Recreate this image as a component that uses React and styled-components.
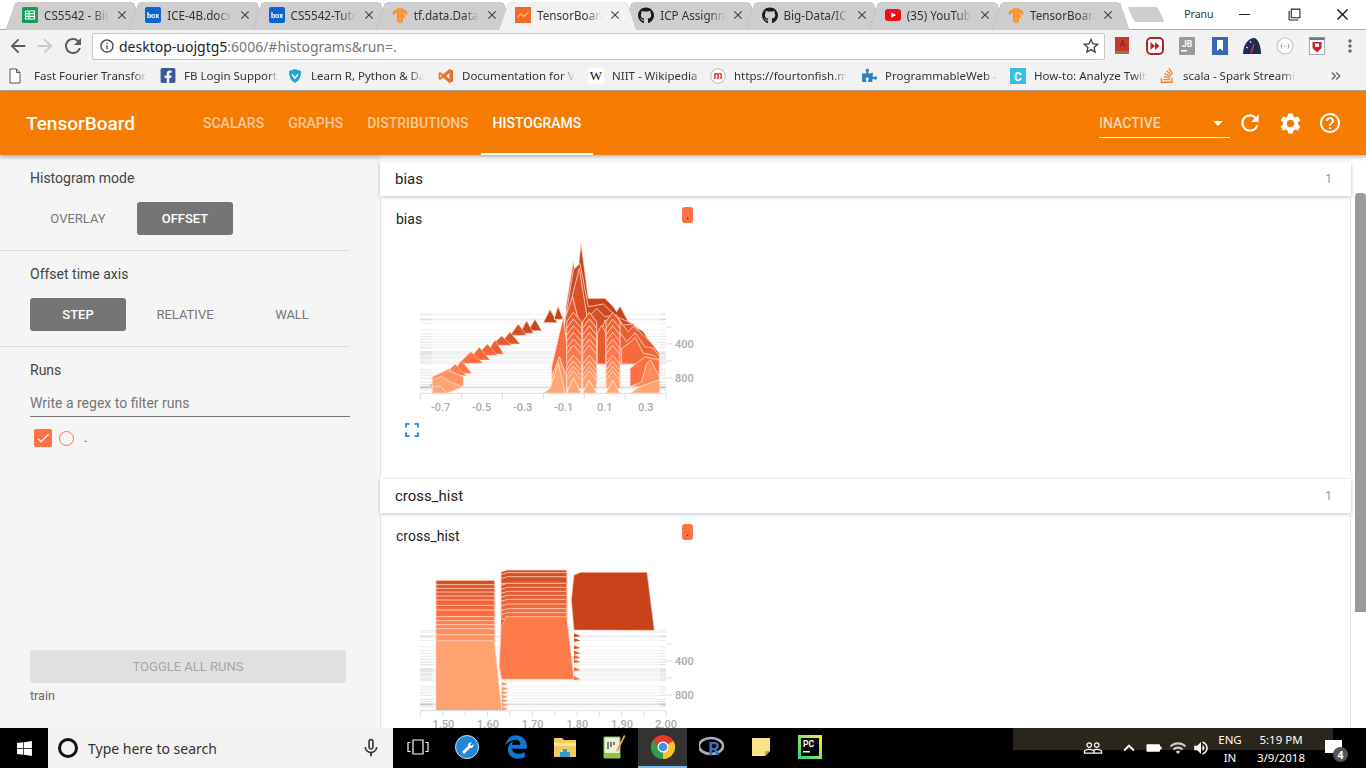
import React from "react";
import styled, { createGlobalStyle } from "styled-components";
import { FaGithub, FaFacebookSquare, FaWindows, FaStackOverflow, FaPuzzlePiece, FaEdgeLegacy } from "react-icons/fa";
import { SiTensorflow } from "react-icons/si";
import {
  MdRefresh, MdSettings, MdHelpOutline, MdArrowBack, MdArrowForward, MdClose,
  MdInfoOutline, MdStarBorder, MdCheck, MdMoreVert, MdKeyboardDoubleArrowRight,
  MdFilterNone, MdKeyboardArrowUp, MdVolumeUp, MdWifi, MdBatteryFull,
  MdMicNone, MdPeopleOutline,
} from "react-icons/md";

const GlobalStyle = createGlobalStyle`
  html, body { margin: 0; padding: 0; height: 100%; overflow: hidden; background: #fff; }
  * { box-sizing: border-box; }
`;

const mix = (t) => {
  const stops = [[200, 66, 26], [255, 112, 67], [255, 166, 116]];
  const p = t < 0.6 ? t / 0.6 : (t - 0.6) / 0.4;
  const a = t < 0.6 ? stops[0] : stops[1];
  const b = t < 0.6 ? stops[1] : stops[2];
  return `rgb(${a.map((v, i) => Math.round(v + (b[i] - v) * p)).join(",")})`;
};

function Sheets() {
  return (
    <svg width="16" height="16" viewBox="0 0 16 16">
      <rect width="16" height="16" rx="1.5" fill="#0f9d58" />
      <path d="M3.5 4h9v8h-9zM3.5 6.7h9M3.5 9.3h9M7 4v8" fill="none" stroke="#fff" strokeWidth="1.2" />
    </svg>
  );
}
function Box() {
  return (
    <svg width="16" height="16" viewBox="0 0 16 16">
      <rect width="16" height="16" rx="2" fill="#0b63d8" />
      <text x="8" y="11" fontSize="7.5" fontWeight="700" fontFamily="Roboto, sans-serif" fill="#fff" textAnchor="middle">box</text>
    </svg>
  );
}
function BoardIcon() {
  return (
    <svg width="16" height="16" viewBox="0 0 16 16">
      <rect width="16" height="16" fill="#f4692a" />
      <path d="M2.5 10.5 6 7l2.5 2.5L13.5 5" fill="none" stroke="#ffc23d" strokeWidth="1.4" />
    </svg>
  );
}
function YouTube() {
  return (
    <svg width="16" height="16" viewBox="0 0 16 16">
      <rect y="2" width="16" height="12" rx="3" fill="#e8101a" />
      <path d="M6.3 5.2 11 8l-4.7 2.8z" fill="#fff" />
    </svg>
  );
}
const Flow = () => <SiTensorflow size={17} color="#ff8f1c" />;
const Git = () => <FaGithub size={17} color="#1b1b1b" />;

const tabs = [
  [Sheets, "CS5542 - Big"],
  [Box, "ICE-4B.docx"],
  [Box, "CS5542-Tuto"],
  [Flow, "tf.data.Data"],
  [BoardIcon, "TensorBoard"],
  [Git, "ICP Assignm"],
  [Git, "Big-Data/IC"],
  [YouTube, "(35) YouTub"],
  [Flow, "TensorBoard"],
];

function PageIcon() {
  return (
    <svg width="16" height="16" viewBox="0 0 16 16">
      <path d="M3 1h6.5L13 4.5V15H3z M9.5 1v3.5H13" fill="#fff" stroke="#555" strokeWidth="1" />
    </svg>
  );
}
function ShieldIcon() {
  return (
    <svg width="16" height="16" viewBox="0 0 16 16">
      <path d="M8 1 14 3c0 6-1.5 9.5-6 12C3.500 12.500 2 9 2 3z" fill="#2aa3cf" />
      <path d="M5 6.500 8 10l3-3.500" fill="none" stroke="#fff" strokeWidth="1.6" />
    </svg>
  );
}
function VsIcon() {
  return (
    <svg width="16" height="16" viewBox="0 0 16 16">
      <path d="M11.500 1 15 2.500v11L11.500 15 5 9.500 2 12 .7 11V5L2 4l3 2.500zM11.500 5 8 8l3.500 3zM2.300 6.300v3.400L4 8z" fill="#e8702a" />
    </svg>
  );
}
function WikiIcon() {
  return (
    <IconTile $bg="#fff">
      <WikiLetter>W</WikiLetter>
    </IconTile>
  );
}
function FourIcon() {
  return (
    <svg width="16" height="16" viewBox="0 0 16 16">
      <circle cx="8" cy="8" r="7.200" fill="#fff" stroke="#bbb" />
      <text x="8" y="11" fontSize="10" fontWeight="700" fontFamily="Roboto, sans-serif" fill="#d8262c" textAnchor="middle">m</text>
    </svg>
  );
}
function CIcon() {
  return (
    <svg width="16" height="16" viewBox="0 0 16 16">
      <rect width="16" height="16" fill="#35c0e8" />
      <text x="8" y="12.500" fontSize="12" fontWeight="700" fontFamily="Roboto, sans-serif" fill="#fff" textAnchor="middle">C</text>
    </svg>
  );
}

const bookmarks = [
  [PageIcon, "Fast Fourier Transform", 153, 113],
  [() => <FaFacebookSquare size={17} color="#3b5998" />, "FB Login Support", 127, 95],
  [ShieldIcon, "Learn R, Python & Da", 151, 113],
  [VsIcon, "Documentation for V", 150, 113],
  [WikiIcon, "NIIT - Wikipedia", 122, 90],
  [FourIcon, "https://fourtonfish.ma", 151, 113],
  [() => <FaPuzzlePiece size={15} color="#2b83b8" />, "ProgrammableWeb -", 149, 113],
  [CIcon, "How-to: Analyze Twit", 149, 113],
  [() => <FaStackOverflow size={17} color="#f48024" />, "scala - Spark Streamin", 165, 113],
];

function ExtBook() {
  return (
    <svg width="18" height="20" viewBox="0 0 18 20">
      <path d="M2 1h14v15H4c-1.500 0-2 1-2 2z" fill="#c8382e" />
      <path d="M2 16.500c0-1 .8-1.500 2-1.500h12v3H2z" fill="#8a7a52" />
      <text x="9.500" y="11" fontSize="9" fontFamily="Roboto, sans-serif" fill="#7d1810" textAnchor="middle">A</text>
    </svg>
  );
}
function ExtForward() {
  return (
    <svg width="18" height="18" viewBox="0 0 18 18">
      <rect x="1" y="1" width="16" height="16" rx="4" fill="#fff" stroke="#b3202a" strokeWidth="2" />
      <path d="M4.500 5v8l4.500-4zM9 5v8l4.500-4z" fill="#b3202a" />
    </svg>
  );
}
function ExtJb() {
  return (
    <svg width="16" height="18" viewBox="0 0 16 18">
      <rect width="16" height="18" rx="1" fill="#9a9a9a" />
      <text x="8" y="9.500" fontSize="8.500" fontWeight="700" fontFamily="Roboto, sans-serif" fill="#fff" textAnchor="middle">JB</text>
      <rect x="2" y="13" width="6" height="1.500" fill="#fff" />
    </svg>
  );
}
function ExtMark() {
  return (
    <svg width="16" height="18" viewBox="0 0 16 18">
      <rect width="16" height="18" fill="#3a66b8" />
      <path d="M5 3h6v11l-3-2.500L5 14z" fill="#fff" />
    </svg>
  );
}
function ExtGauge() {
  return (
    <svg width="18" height="16" viewBox="0 0 18 16">
      <path d="M0 16C0 6 6 0 11 0c4 0 7 8 7 16z" fill="#1b2a63" />
      <path d="M15 13c0-4-2-8-4-10" fill="none" stroke="#2b2b3d" strokeWidth="3" />
      <path d="M8 15 11 6" stroke="#e0342c" strokeWidth="1.500" />
      <path d="M3 9l2 1M7 3l1 2" stroke="#fff" strokeWidth="1" />
    </svg>
  );
}
function ExtDots() {
  return (
    <svg width="18" height="18" viewBox="0 0 18 18">
      <circle cx="9" cy="9" r="8" fill="#fff" stroke="#c4c4c4" strokeWidth="1.200" />
      <path d="M6 6.500c-1 1.500-1 3.500 0 5M12 6.500c1 1.500 1 3.500 0 5" fill="none" stroke="#999" />
      <path d="M7.500 9h3" stroke="#999" strokeDasharray="1 1" />
    </svg>
  );
}
function ExtShield() {
  return (
    <svg width="16" height="18" viewBox="0 0 16 18">
      <rect x=".5" y=".5" width="15" height="17" fill="#fff" stroke="#aaa" />
      <rect x=".5" y=".5" width="15" height="2.500" fill="#607d8b" />
      <path d="M3.500 5h9v6l-4.500 4.500L3.500 11z" fill="#c5242c" />
      <path d="M6 6.500h4v3.500H6z" fill="#fff" />
    </svg>
  );
}

const extensions = [ExtBook, ExtForward, ExtJb, ExtMark, ExtGauge, ExtDots, ExtShield];

const biasBands = [
  [340, 3, 0.14], [345, 2, 0.1], [356, 3, 0.3], [362, 2, 0.12], [370, 2, 0.14], [388, 3, 0.1],
  [400, 3, 0.1], [408, 3, 0.12], [416, 4, 0.09], [425, 4, 0.12], [433, 5, 0.1], [441, 4, 0.13],
  [453, 12, 0.14], [467, 12, 0.11], [481, 12, 0.1], [506, 6, 0.08], [515, 5, 0.09], [524, 5, 0.1],
  [533, 4, 0.12], [545, 3, 0.14], [552, 3, 0.14], [559, 6, 0.36], [568, 3, 0.12],
];
const crossBands = biasBands.map(([y, h, o]) => [y - 9, h, o]);

const wing = [
  [405, 358, 392, 20], [380, 362, 400, 20], [355, 372, 406, 24], [330, 396, 432, 30], [305, 408, 436, 30],
  [285, 420, 462, 26], [262, 432, 466, 30], [238, 442, 480, 32], [213, 455, 490, 36], [185, 482, 520, 30],
  [165, 492, 527, 34], [145, 506, 532, 40], [122, 522, 558, 34],
];

const backRows = [
  [0, "430,368 450,328 472,368"],
  [0, "462,358 474,318 490,358"],
  [0, "498,320 520,185 530,250 543,130 565,295 615,295 640,320 650,335 660,318 685,365 730,395 780,470 500,470"],
  [0.08, "500,335 520,210 540,190 565,320 610,312 650,350 700,372 740,420 778,470 500,470"],
  [0.2, "490,440 505,345 520,275 538,205 562,355 590,325 615,350 650,345 668,375 700,372 745,430 778,460 778,492 490,492"],
  [0.3, "478,470 497,350 518,290 545,400 565,385 590,440 615,360 640,400 660,370 690,420 735,430 778,480 778,492 665,492 655,440 630,492 592,492 565,440 545,468 478,468"],
  [0.34, "592,492 592,400 605,375 618,400 618,492"],
  [0.36, "640,492 640,400 660,365 685,395 700,378 730,405 755,430 778,460 778,492"],
  [0.44, "640,492 640,420 655,390 680,425 705,398 735,440 760,445 778,470 778,492"],
  [0.52, "665,492 665,445 690,428 705,412 730,460 760,465 778,480 778,492"],
];

const chevronCols = [
  [500, 520, 545],
  [548, 568, 590],
  [618, 638, 660],
];
const chevronRows = [-190, -170, -150, -130, -110, -92, -62, -44, -28, -14];

function BiasPlot() {
  return (
    <>
      {wing.map(([cx, top, base, half], i) => (
        <polygon
          key={cx}
          points={`${cx - half},${base} ${cx},${top} ${cx + half},${base}`}
          fill={mix(0.05 + (i / wing.length) * 0.85)}
          stroke="#ffd9c9"
          strokeWidth="1.500"
        />
      ))}
      <polygon points="97,558 97,530 140,510 190,530 190,558" fill={mix(0.85)} stroke="#ffe0d2" strokeWidth="2" />
      <polygon points="97,580 97,542 125,528 150,545 190,560 140,580" fill={mix(1)} stroke="#ffe0d2" strokeWidth="2" />
      <polygon points="97,580 97,562 120,558 142,580" fill={mix(1)} stroke="#ffe0d2" strokeWidth="2" />
      {backRows.map(([t, points]) => (
        <polygon key={points} points={points} fill={mix(t)} stroke="#ffd9c9" strokeWidth="2.500" />
      ))}
      <polygon points="455,500 490,350 505,470 505,530 455,530" fill={mix(0.55)} stroke="#ffe0d2" strokeWidth="2.500" />
      {chevronRows.map((off, r) =>
        chevronCols.map(([a, b, c]) => (
          <polygon
            key={`${a}${off}`}
            points={`${a},${580 + off} ${a},${555 + off} ${b},${527 + off} ${c},${555 + off} ${c},${580 + off}`}
            fill={mix(0.36 + r * 0.065)}
            stroke="#ffe0d2"
            strokeWidth="2.500"
          />
        ))
      )}
      <polygon points="690,560 690,505 735,470 778,480 778,560" fill={mix(0.6)} stroke="#ffe0d2" strokeWidth="2.500" />
      <polygon points="690,560 725,545 740,490 752,480 778,530 778,560" fill={mix(0.8)} stroke="#ffe0d2" strokeWidth="2.500" />
      <polygon points="455,530 478,470 500,530 500,580 455,580" fill={mix(0.9)} stroke="#ffe6db" strokeWidth="2.500" />
      <polygon points="430,580 450,565 475,490 495,580" fill={mix(1)} stroke="#ffe6db" strokeWidth="2.500" />
      <polygon points="500,580 520,532 543,580" fill={mix(1)} stroke="#ffe6db" strokeWidth="2.500" />
      <polygon points="548,580 568,540 590,580" fill={mix(1)} stroke="#ffe6db" strokeWidth="2.500" />
      <polygon points="618,580 638,540 660,580" fill={mix(1)} stroke="#ffe6db" strokeWidth="2.500" />
      <polygon points="690,580 720,560 780,538 780,580" fill={mix(1)} stroke="#ffe6db" strokeWidth="2.500" />
    </>
  );
}

const leftStripes = [181, 194, 205, 216, 228, 240, 256, 270, 290, 302, 314, 326, 344];
const midStripes = [150, 158, 170, 190, 202, 214, 226, 238, 252, 266, 278];
const teeth = [340, 354, 376, 392, 405, 418, 442];

function CrossPlot() {
  return (
    <>
      <polygon points="522,330 514,240 522,165 542,157 741,157 763,331" fill="#c8431a" stroke="#ffd9c9" strokeWidth="1.500" />
      {leftStripes.map((y, i) => (
        <polygon
          key={y}
          points={`108,${y + 22} 108,${y} 283,${y} 286,${y + 22}`}
          fill={mix(0.15 + i * 0.06)}
          stroke="#ffd9c9"
          strokeWidth="2.500"
        />
      ))}
      <polygon points="303,320 303,158 322,150 500,150 502,300" fill={mix(0.3)} />
      {midStripes.map((y, i) => (
        <polygon
          key={y}
          points={`303,${y + 20} 303,${y + 6} 322,${y} 500,${y} 502,${y + 20}`}
          fill={mix(0.1 + i * 0.045)}
          stroke="#ffd9c9"
          strokeWidth="2.500"
        />
      ))}
      <polygon points="298,440 303,320 320,290 500,290 522,478 305,478" fill="#ff7a4b" stroke="#ffd9c9" strokeWidth="2" />
      {teeth.map((y, i) => (
        <polygon key={y} points={`522,${y} 542,${y + 8} 522,${y + 12}`} fill={mix(0.1 + i * 0.08)} />
      ))}
      <polygon points="522,468 542,478 522,480" fill={mix(0.6)} />
      {[486, 500, 512, 524, 536, 548, 560].map((y) => (
        <polygon key={y} points={`305,${y} 325,${y + 6} 305,${y + 12}`} fill="#ff9c6e" />
      ))}
      <polygon points="108,362 283,362 305,572 108,572" fill="#ffa26f" stroke="#ffd9c9" strokeWidth="2" />
    </>
  );
}

function Axes({ bands, baseY, labels, tickXs, labelXs, rightTicks, children }) {
  return (
    <>
      {bands.map(([y, h, o]) => (
        <g key={y}>
          <rect x="60" y={y} width="738" height={h} fill="#9e9e9e" opacity={o} />
          <rect x="60" y={y} width="37" height={h} fill="#9e9e9e" opacity={o} />
          <rect x="780" y={y} width="18" height={h} fill="#9e9e9e" opacity={o} />
        </g>
      ))}
      {children}
      <path d={`M61 ${baseY + 18}V${baseY}H798V${baseY + 18}`} fill="none" stroke="#ddd" strokeWidth="3" />
      {tickXs.map((x) => (
        <path key={x} d={`M${x} ${baseY}v18`} stroke="#ddd" strokeWidth="3" />
      ))}
      {labels.map((l, i) => (
        <AxisText key={l} x={labelXs[i]} y={baseY + 53} textAnchor="middle">{l}</AxisText>
      ))}
      {rightTicks.map((y) => (
        <path key={y} d={`M798 ${y}h18`} stroke="#ddd" strokeWidth="3" />
      ))}
      <AxisText x="825" y={rightTicks[1] + 11}>400</AxisText>
      <AxisText x="825" y={rightTicks[3] + 11}>800</AxisText>
    </>
  );
}

function BiasChart() {
  return (
    <ChartSvg viewBox="0 96 900 552">
      <Axes
        bands={biasBands}
        baseY={580}
        labels={["-0.7", "-0.5", "-0.3", "-0.1", "0.1", "0.3"]}
        tickXs={[184, 307, 430, 553, 676]}
        labelXs={[122, 245, 368, 491, 614, 737]}
        rightTicks={[381, 432, 483, 534]}
      >
        <BiasPlot />
      </Axes>
    </ChartSvg>
  );
}

function CrossChart() {
  return (
    <ChartSvg viewBox="0 87 900 552">
      <Axes
        bands={crossBands}
        baseY={572}
        labels={["1.50", "1.60", "1.70", "1.80", "1.90", "2.00"]}
        tickXs={[129, 196, 263, 330, 397, 464, 531, 598, 665, 732]}
        labelXs={[130, 264, 398, 532, 666, 798]}
        rightTicks={[372, 423, 474, 525]}
      >
        <CrossPlot />
      </Axes>
    </ChartSvg>
  );
}

function ExpandIcon() {
  return (
    <ExpandSvg width="14" height="14" viewBox="0 0 14 14">
      <path d="M1 4.500V1h3.500M9.500 1H13v3.500M13 9.500V13H9.500M4.500 13H1V9.500" fill="none" stroke="#2196f3" strokeWidth="2" />
    </ExpandSvg>
  );
}

function Section({ title, chart }) {
  return (
    <>
      <CategoryHeader>
        <CategoryName>{title}</CategoryName>
        <CategoryCount>1</CategoryCount>
      </CategoryHeader>
      <CategoryBody>
        <TagRow>
          <TagName>{title}</TagName>
          <RunChip>.</RunChip>
        </TagRow>
        {chart}
        <ExpandIcon />
      </CategoryBody>
    </>
  );
}

function ChromeLogo() {
  return (
    <svg width="24" height="24" viewBox="0 0 24 24">
      <circle cx="12" cy="12" r="12" fill="#e23b2e" />
      <path d="M12 12 22.400 6A12 12 0 0 1 12 24z" fill="#fbc02d" />
      <path d="M12 12 12 24A12 12 0 0 1 1.600 6z" fill="#2e9e4f" />
      <circle cx="12" cy="12" r="5.500" fill="#fff" />
      <circle cx="12" cy="12" r="4.300" fill="#4a8df0" />
    </svg>
  );
}
function WrenchLogo() {
  return (
    <svg width="24" height="24" viewBox="0 0 24 24">
      <circle cx="12" cy="12" r="11.500" fill="#1f87d6" stroke="#cfe7f8" />
      <path d="M7 17l6-6c-.5-2 1-4 4-3.500l-2 2 1.500 1.500 2-2c.5 3-1.500 4.500-3.500 4L9 19z" fill="#fff" />
    </svg>
  );
}
function FolderLogo() {
  return (
    <svg width="24" height="22" viewBox="0 0 24 22">
      <path d="M1 2h8l2 2h12v17H1z" fill="#f3cd5f" />
      <path d="M1 7h22v3H1z" fill="#fbe59a" />
      <path d="M7 16h10v5H7z" fill="#2c9ad6" />
      <path d="M10 13h4v3h-4z" fill="#2c9ad6" />
    </svg>
  );
}
function NoteLogo() {
  return (
    <svg width="24" height="26" viewBox="0 0 24 26">
      <path d="M2 3h16v21H2z" fill="#e8f0d8" stroke="#8eb85c" />
      <path d="M2 19h16v5H2z" fill="#8ec63f" />
      <path d="M6 8v7M9 8v5M12 8v3" stroke="#333" strokeWidth="1.200" />
      <path d="M22 1 15 15l-1 3 2.500-2L23.500 2z" fill="#e9a23b" />
    </svg>
  );
}
function RLogo() {
  return (
    <svg width="26" height="22" viewBox="0 0 26 22">
      <ellipse cx="12" cy="10" rx="12" ry="8" fill="none" stroke="#a9b1bf" strokeWidth="2.500" />
      <text x="15" y="19" fontSize="18" fontWeight="700" fontFamily="Roboto, sans-serif" fill="#3b6fb6" textAnchor="middle">R</text>
    </svg>
  );
}
function StickyLogo() {
  return (
    <svg width="20" height="20" viewBox="0 0 20 20">
      <path d="M1 1h18v13l-5 5H1z" fill="#f7e38a" />
      <path d="M14 19v-5h5z" fill="#c9a938" />
    </svg>
  );
}
function PyLogo() {
  return (
    <svg width="24" height="24" viewBox="0 0 24 24">
      <defs>
        <linearGradient id="pyFrame" x1="0" y1="1" x2="1" y2="0">
          <stop offset="0" stopColor="#21d789" />
          <stop offset="1" stopColor="#f4ee40" />
        </linearGradient>
      </defs>
      <rect width="24" height="24" fill="url(#pyFrame)" />
      <rect x="3" y="3" width="18" height="18" fill="#000" />
      <text x="5" y="12" fontSize="8.500" fontWeight="700" fontFamily="Roboto, sans-serif" fill="#fff">PC</text>
      <rect x="5" y="16" width="7" height="1.500" fill="#fff" />
    </svg>
  );
}
function TaskViewIcon() {
  return (
    <svg width="22" height="16" viewBox="0 0 22 16">
      <path d="M6 1h10v14H6zM3.500 3.500H1v9h2.500M18.500 3.500H21v9h-2.500" fill="none" stroke="#fff" strokeWidth="1.200" />
    </svg>
  );
}

const taskApps = [
  [TaskViewIcon, false],
  [WrenchLogo, false],
  [() => <FaEdgeLegacy size={24} color="#0f78d4" />, false],
  [FolderLogo, false],
  [NoteLogo, false],
  [ChromeLogo, true],
  [RLogo, false],
  [StickyLogo, false],
  [PyLogo, false],
];

export default function App() {
  return (
    <Screen>
      <GlobalStyle />
      <TabStrip>
        {tabs.map(([Icon, label], i) => (
          <TabWrap key={i} $active={i === 4}>
            <TabShape $active={i === 4}>
              <FavSlot><Icon /></FavSlot>
              <TabLabel>{label}</TabLabel>
              <MdClose size={14} color="#444" />
            </TabShape>
          </TabWrap>
        ))}
        <NewTab />
        <ProfileName>Pranu</ProfileName>
        <WindowButtons>
          <WindowButton><MinimizeBar /></WindowButton>
          <WindowButton><MdFilterNone size={13} color="#222" /></WindowButton>
          <WindowButton><MdClose size={19} color="#222" /></WindowButton>
        </WindowButtons>
      </TabStrip>

      <Toolbar>
        <NavButton><MdArrowBack size={22} color="#5a5a5a" /></NavButton>
        <NavButton><MdArrowForward size={22} color="#c8c8c8" /></NavButton>
        <NavButton><MdRefresh size={24} color="#5a5a5a" /></NavButton>
        <Omnibox>
          <MdInfoOutline size={16} color="#444" />
          <UrlHost>desktop-uojgtg5</UrlHost>
          <UrlRest>:6006/#histograms&amp;run=.</UrlRest>
          <StarSlot><MdStarBorder size={20} color="#444" /></StarSlot>
        </Omnibox>
        <ExtRow>
          {extensions.map((Ext, i) => (
            <ExtCell key={i}><Ext /></ExtCell>
          ))}
          <ExtCell><MdMoreVert size={20} color="#666" /></ExtCell>
        </ExtRow>
      </Toolbar>

      <BookmarkBar>
        {bookmarks.map(([Icon, label, w, lw]) => (
          <Bookmark key={label} $w={w}>
            <FavSlot><Icon /></FavSlot>
            <BookmarkLabel $w={lw}>{label}</BookmarkLabel>
          </Bookmark>
        ))}
        <MoreBookmarks><MdKeyboardDoubleArrowRight size={16} color="#666" /></MoreBookmarks>
      </BookmarkBar>

      <TopBar>
        <Brand>TensorBoard</Brand>
        <NavTab>Scalars</NavTab>
        <NavTab>Graphs</NavTab>
        <NavTab>Distributions</NavTab>
        <NavTab $active>Histograms</NavTab>
        <RunSelect>
          <span>INACTIVE</span>
          <SelectCaret />
        </RunSelect>
        <TopIcon><MdRefresh size={26} /></TopIcon>
        <TopIcon><MdSettings size={25} /></TopIcon>
        <TopIcon><MdHelpOutline size={24} /></TopIcon>
      </TopBar>

      <Body>
        <Sidebar>
          <SideSection>
            <SideLabel>Histogram mode</SideLabel>
            <ToggleRow>
              <Toggle>Overlay</Toggle>
              <Toggle $on>Offset</Toggle>
            </ToggleRow>
          </SideSection>
          <SideSection>
            <SideLabel>Offset time axis</SideLabel>
            <ToggleRow>
              <Toggle $on>Step</Toggle>
              <Toggle>Relative</Toggle>
              <Toggle>Wall</Toggle>
            </ToggleRow>
          </SideSection>
          <RunsSection>
            <SideLabel>Runs</SideLabel>
            <RegexInput>Write a regex to filter runs</RegexInput>
            <RunRow>
              <CheckBox><MdCheck size={16} color="#fff" /></CheckBox>
              <RunRadio />
              <RunName>.</RunName>
            </RunRow>
            <ToggleAll>Toggle all runs</ToggleAll>
            <TrainLabel>train</TrainLabel>
          </RunsSection>
        </Sidebar>
        <Content>
          <Section title="bias" chart={<BiasChart />} />
          <Spacer />
          <Section title="cross_hist" chart={<CrossChart />} />
        </Content>
        <ScrollTrack>
          <ScrollThumb />
        </ScrollTrack>
      </Body>

      <Taskbar>
        <TrayGlitch />
        <StartButton><FaWindows size={17} color="#fff" /></StartButton>
        <SearchBox>
          <CortanaRing />
          <SearchText>Type here to search</SearchText>
          <MdMicNone size={22} color="#333" />
        </SearchBox>
        {taskApps.map(([Icon, active], i) => (
          <TaskCell key={i} $active={active}><Icon /></TaskCell>
        ))}
        <Tray>
          <TrayCell $w={26}><MdPeopleOutline size={20} color="#fff" /></TrayCell>
          <TrayCell $w={11} />
          <TrayCell $w={24}><MdKeyboardArrowUp size={22} color="#fff" /></TrayCell>
          <TrayCell $w={25}><MdBatteryFull size={18} color="#fff" style={{ transform: "rotate(90deg)" }} /></TrayCell>
          <TrayCell $w={24}><MdWifi size={18} color="#ccc" /></TrayCell>
          <TrayCell $w={22}><MdVolumeUp size={18} color="#fff" /></TrayCell>
          <TrayText $w={36}><span>ENG</span><span>IN</span></TrayText>
          <TrayCell $w={2} />
          <TrayText $w={62}><span>5:19 PM</span><span>3/9/2018</span></TrayText>
          <NotifyCell>
            <NotifyBubble />
            <NotifyBadge>4</NotifyBadge>
          </NotifyCell>
        </Tray>
      </Taskbar>
    </Screen>
  );
}

const chromeFont = `"Noto Sans", "Open Sans", sans-serif`;
const tbFont = `Roboto, "Noto Sans", sans-serif`;

const Screen = styled.div`
  width: 1366px;
  height: 768px;
  display: flex;
  flex-direction: column;
  overflow: hidden;
  background: #fff;
`;

const TabStrip = styled.div`
  height: 30px;
  flex: none;
  display: flex;
  align-items: flex-end;
  padding-left: 6px;
  background: #fff;
  border-bottom: 1px solid #aaa;
`;

const TabWrap = styled.div`
  width: 137.25px;
  height: 28px;
  flex: none;
  margin-left: -14px;
  margin-bottom: -1px;
  position: relative;
  z-index: ${(p) => (p.$active ? 2 : 1)};
  filter: drop-shadow(0 0 0.6px #8a8a8a);
  &:first-child {
    margin-left: 0;
  }
`;

const TabShape = styled.div`
  height: 100%;
  display: flex;
  align-items: center;
  gap: 6px;
  padding: 0 0 2px 16px;
  background: ${(p) => (p.$active ? "#f2f2f2" : "#cecece")};
  clip-path: polygon(0 100%, 9px 6%, 13px 0, calc(100% - 13px) 0, calc(100% - 9px) 6%, 100% 100%);
`;

const FavSlot = styled.span`
  width: 16px;
  height: 16px;
  flex: none;
  display: flex;
  align-items: center;
  justify-content: center;
`;

const TabLabel = styled.span`
  width: 65px;
  font: 11.7px ${chromeFont};
  color: #333;
  white-space: nowrap;
  overflow: hidden;
  -webkit-mask-image: linear-gradient(to right, #000 76%, transparent);
  mask-image: linear-gradient(to right, #000 76%, transparent);
`;

const NewTab = styled.div`
  width: 30px;
  height: 15px;
  flex: none;
  align-self: flex-start;
  margin: 7px 0 0 2px;
  background: #cecece;
  transform: skewX(25deg);
  border-radius: 2px;
`;

const ProfileName = styled.div`
  width: 30px;
  margin-left: 23px;
  align-self: flex-start;
  margin-top: 7px;
  font: 10.5px ${chromeFont};
  color: #333;
`;

const WindowButtons = styled.div`
  margin-left: auto;
  display: flex;
  align-self: flex-start;
`;

const WindowButton = styled.div`
  width: 48px;
  height: 28px;
  display: flex;
  align-items: center;
  justify-content: center;
`;

const MinimizeBar = styled.i`
  width: 11px;
  height: 1px;
  background: #222;
  margin-right: 4px;
`;

const Toolbar = styled.div`
  height: 30px;
  flex: none;
  display: flex;
  align-items: center;
  padding: 2px 0 0 4px;
  background: #f2f2f2;
`;

const NavButton = styled.div`
  width: 27.5px;
  display: flex;
  justify-content: center;
`;

const Omnibox = styled.div`
  flex: 1;
  height: 27px;
  margin-left: 5.5px;
  display: flex;
  align-items: center;
  padding: 0 3px 0 6px;
  background: #fff;
  border: 1px solid #c8c8c8;
  border-radius: 2px;
  font: 14px ${chromeFont};
`;

const UrlHost = styled.span`
  margin-left: 4px;
  color: #222;
`;

const UrlRest = styled.span`
  color: #777;
`;

const StarSlot = styled.span`
  margin-left: auto;
  display: flex;
`;

const ExtRow = styled.div`
  display: flex;
  margin-left: 1px;
  flex: none;
`;

const ExtCell = styled.div`
  width: 32.5px;
  height: 24px;
  display: flex;
  align-items: center;
  justify-content: center;
`;

const BookmarkBar = styled.div`
  height: 31px;
  flex: none;
  display: flex;
  align-items: center;
  padding: 1px 0 0 7px;
  background: #f2f2f2;
  border-bottom: 1px solid #aaa;
`;

const Bookmark = styled.div`
  width: ${(p) => p.$w}px;
  flex: none;
  display: flex;
  align-items: center;
  gap: 8px;
  &:first-child {
    gap: 11px;
  }
`;

const BookmarkLabel = styled.span`
  width: ${(p) => p.$w}px;
  font: 11.5px ${chromeFont};
  color: #333;
  white-space: nowrap;
  overflow: hidden;
  -webkit-mask-image: linear-gradient(to right, #000 88%, transparent);
  mask-image: linear-gradient(to right, #000 88%, transparent);
`;

const MoreBookmarks = styled.div`
  margin-left: 4px;
  display: flex;
`;

const IconTile = styled.span`
  width: 16px;
  height: 16px;
  display: flex;
  align-items: center;
  justify-content: center;
  background: ${(p) => p.$bg};
`;

const WikiLetter = styled.span`
  font: 13px "Liberation Serif", serif;
  color: #111;
`;

const TopBar = styled.header`
  height: 64px;
  flex: none;
  display: flex;
  align-items: stretch;
  padding: 0 16px 0 26px;
  background: #f57c00;
  box-shadow: 0 2px 4px rgba(0, 0, 0, 0.3);
  position: relative;
  z-index: 3;
  font-family: ${tbFont};
`;

const Brand = styled.div`
  width: 165px;
  align-self: center;
  font-size: 19px;
  font-weight: 500;
  color: #fff;
`;

const NavTab = styled.div`
  display: flex;
  align-items: center;
  padding: 2px 12px 0;
  font-size: 14px;
  font-weight: 500;
  text-transform: uppercase;
  color: ${(p) => (p.$active ? "#fff" : "rgba(255, 255, 255, 0.6)")};
  border-bottom: 2px solid ${(p) => (p.$active ? "#fff" : "transparent")};
`;

const RunSelect = styled.div`
  width: 131px;
  height: 29px;
  align-self: center;
  margin: 1px 0 0 auto;
  display: flex;
  align-items: center;
  justify-content: space-between;
  padding-right: 7px;
  font-size: 14px;
  font-weight: 500;
  color: rgba(255, 255, 255, 0.7);
  border-bottom: 1px solid #fff;
`;

const SelectCaret = styled.i`
  width: 0;
  height: 0;
  border-left: 5px solid transparent;
  border-right: 5px solid transparent;
  border-top: 5px solid #fff;
`;

const TopIcon = styled.div`
  width: 40px;
  display: flex;
  align-items: center;
  justify-content: center;
  color: #fff;
`;

const Body = styled.main`
  flex: 1;
  min-height: 0;
  display: flex;
  overflow: hidden;
  background: #fff;
`;

const Sidebar = styled.aside`
  width: 380px;
  flex: none;
  display: flex;
  flex-direction: column;
  background: #f5f5f5;
  font-family: ${tbFont};
`;

const SideSection = styled.section`
  width: 350px;
  height: 96px;
  flex: none;
  padding: 15px 0 0 30px;
  border-bottom: 1px solid #ddd;
`;

const RunsSection = styled.section`
  flex: 1;
  display: flex;
  flex-direction: column;
  padding: 15px 0 0 30px;
`;

const SideLabel = styled.div`
  font-size: 14px;
  line-height: 16px;
  color: #444;
`;

const ToggleRow = styled.div`
  display: flex;
  gap: 11px;
  margin-top: 16px;
`;

const Toggle = styled.div`
  width: 96px;
  height: 33px;
  display: flex;
  align-items: center;
  justify-content: center;
  font-size: 13px;
  font-weight: ${(p) => (p.$on ? 500 : 400)};
  text-transform: uppercase;
  border-radius: 3px;
  background: ${(p) => (p.$on ? "#757575" : "transparent")};
  color: ${(p) => (p.$on ? "#fff" : "#777")};
`;

const RegexInput = styled.div`
  width: 320px;
  height: 30px;
  margin-top: 9px;
  padding-top: 8px;
  font-size: 14px;
  line-height: 16px;
  color: #757575;
  border-bottom: 1px solid #757575;
`;

const RunRow = styled.div`
  display: flex;
  align-items: center;
  margin: 12px 0 0 4px;
  height: 18px;
`;

const CheckBox = styled.div`
  width: 18px;
  height: 18px;
  display: flex;
  align-items: center;
  justify-content: center;
  background: #ff7043;
  border-radius: 2px;
`;

const RunRadio = styled.div`
  width: 15px;
  height: 15px;
  margin-left: 7px;
  border: 1.5px solid #ff7043;
  border-radius: 50%;
`;

const RunName = styled.span`
  margin-left: 10px;
  font-size: 12px;
  color: #333;
`;

const ToggleAll = styled.div`
  width: 316px;
  height: 33px;
  margin-top: 203px;
  display: flex;
  align-items: center;
  justify-content: center;
  font-size: 13px;
  text-transform: uppercase;
  color: #a6a6a6;
  background: #e0e0e0;
  border-radius: 2px;
`;

const TrainLabel = styled.div`
  margin-top: 5px;
  font-size: 12.5px;
  line-height: 15px;
  color: #666;
`;

const Content = styled.div`
  width: 971px;
  flex: none;
  padding-top: 7px;
  font-family: ${tbFont};
`;

const CategoryHeader = styled.div`
  height: 34px;
  display: flex;
  align-items: center;
  justify-content: space-between;
  padding: 0 19px 0 15px;
  background: #fff;
  box-shadow: 0 1px 4px rgba(0, 0, 0, 0.25);
  position: relative;
  z-index: 1;
`;

const CategoryName = styled.div`
  font-size: 15px;
  color: #222;
`;

const CategoryCount = styled.div`
  font-size: 12px;
  color: #999;
`;

const CategoryBody = styled.div`
  width: 971px;
  height: 278px;
  margin-top: 2px;
  padding: 9px 0 0 15px;
  border-left: 1px solid #e2e2e2;
  border-right: 1px solid #e2e2e2;
`;

const TagRow = styled.div`
  width: 297px;
  height: 25px;
  display: flex;
  justify-content: space-between;
  align-items: flex-start;
`;

const TagName = styled.div`
  font-size: 14px;
  line-height: 24px;
  color: #222;
`;

const RunChip = styled.div`
  width: 11px;
  height: 16px;
  display: flex;
  align-items: center;
  justify-content: center;
  font-size: 11px;
  line-height: 11px;
  color: #111;
  background: #ff7043;
  border-radius: 3px;
`;

const ChartSvg = styled.svg`
  display: block;
  width: 300px;
  height: 184px;
  margin-left: 4px;
`;

const AxisText = styled.text`
  font-family: ${tbFont};
  font-size: 33px;
  font-weight: 500;
  fill: #aaa;
`;

const ExpandSvg = styled.svg`
  display: block;
  margin: 7px 0 0 9px;
`;

const Spacer = styled.div`
  height: 3px;
`;

const ScrollTrack = styled.div`
  flex: 1;
  padding: 38px 0 0 4px;
`;

const ScrollThumb = styled.div`
  height: 419px;
  background: #9a9a9a;
  border-radius: 4px 4px 0 0;
`;

const Taskbar = styled.footer`
  height: 40px;
  flex: none;
  display: flex;
  align-items: stretch;
  position: relative;
  background: #000;
  z-index: 4;
`;

const TrayGlitch = styled.div`
  position: absolute;
  left: 1013px;
  top: 0;
  width: 320px;
  height: 22px;
  background: #2b261c;
`;

const StartButton = styled.div`
  width: 48px;
  display: flex;
  align-items: center;
  justify-content: center;
`;

const SearchBox = styled.div`
  width: 345px;
  display: flex;
  align-items: center;
  padding: 0 11px 0 10px;
  background: #f2f2f2;
`;

const CortanaRing = styled.div`
  width: 20px;
  height: 20px;
  border: 3px solid #111;
  border-radius: 50%;
`;

const SearchText = styled.span`
  flex: 1;
  margin-left: 10px;
  font: 14px ${chromeFont};
  color: #333;
`;

const TaskCell = styled.div`
  width: 49px;
  display: flex;
  align-items: center;
  justify-content: center;
  background: ${(p) => (p.$active ? "#333" : "transparent")};
  border-bottom: 2px solid ${(p) => (p.$active ? "#76b9ed" : "transparent")};
`;

const Tray = styled.div`
  margin-left: auto;
  width: 286px;
  display: flex;
  align-items: center;
  position: relative;
`;

const TrayCell = styled.div`
  width: ${(p) => p.$w}px;
  flex: none;
  display: flex;
  justify-content: center;
`;

const TrayText = styled.div`
  width: ${(p) => p.$w}px;
  flex: none;
  display: flex;
  flex-direction: column;
  align-items: center;
  gap: 3px;
  font: 11.5px/15px ${chromeFont};
  color: #fff;
  white-space: nowrap;
`;

const NotifyCell = styled.div`
  width: 30px;
  height: 24px;
  margin-left: 13px;
  position: relative;
`;

const NotifyBubble = styled.div`
  width: 17px;
  height: 13px;
  margin-top: 4px;
  background: #fff;
`;

const NotifyBadge = styled.div`
  position: absolute;
  left: 8px;
  top: 11px;
  width: 15px;
  height: 15px;
  display: flex;
  align-items: center;
  justify-content: center;
  font: 700 10.5px ${chromeFont};
  color: #fff;
  background: #555;
  border-radius: 50%;
`;
